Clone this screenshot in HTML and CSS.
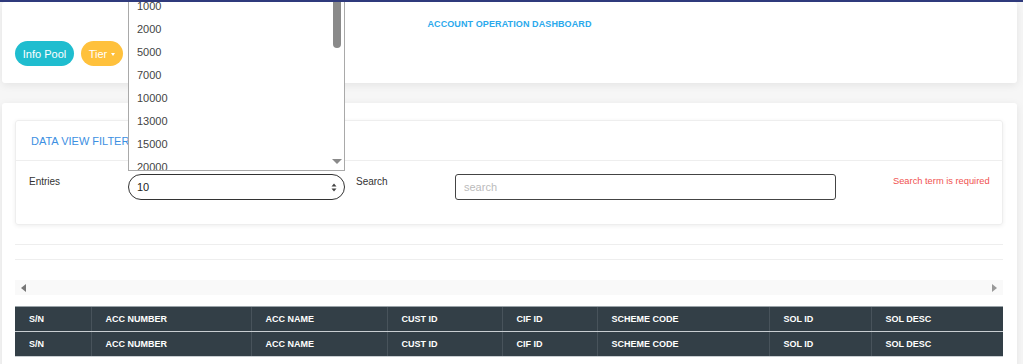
FILE: index.html
```html
<!DOCTYPE html>
<html lang="en">
  <head>
    <meta charset="UTF-8" />
    <meta name="viewport" content="width=device-width, initial-scale=1.0" />
    <title>Account Operation Dashboard</title>
    <link rel="stylesheet" href="styles.css">
  </head>
  <body>
    <div class="page">
      <!-- Header card -->
      <div class="card top-card">
        <h1 class="title">ACCOUNT OPERATION DASHBOARD</h1>
        <div class="actions">
          <button class="pill pill-info">Info Pool</button>
          <button class="pill pill-warn">Tier <span class="caret"></span></button>
        </div>
      </div>

      <!-- Main card -->
      <div class="card main-card">
        <div class="filters">
          <div class="filters-head">DATA VIEW FILTERS</div>
          <div class="filters-body">
            <label class="field-label entries-label">Entries</label>
            <div class="select-wrap">
              <div class="select">
                <span>10</span>
                <svg class="updown" width="6" height="9" viewBox="0 0 6 9">
                  <path d="M3 0.5 L5.5 3.5 H0.5 Z M3 8.5 L5.5 5.5 H0.5 Z" fill="#444" />
                </svg>
              </div>
              <!-- open dropdown -->
              <ul class="options">
                <li>1000</li>
                <li>2000</li>
                <li>5000</li>
                <li>7000</li>
                <li>10000</li>
                <li>13000</li>
                <li>15000</li>
                <li>20000</li>
              </ul>
            </div>
            <label class="field-label search-label">Search</label>
            <input class="search" type="text" placeholder="search" />
            <span class="error">Search term is required</span>
          </div>
        </div>

        <hr class="sep" />
        <hr class="sep" />

        <div class="hscroll">
          <span class="arrow arrow-left"></span>
          <span class="arrow arrow-right"></span>
        </div>

        <table class="grid">
          <colgroup>
            <col style="width: 76px" />
            <col style="width: 160px" />
            <col style="width: 136px" />
            <col style="width: 115px" />
            <col style="width: 95px" />
            <col style="width: 172px" />
            <col style="width: 102px" />
            <col style="width: 132px" />
          </colgroup>
          <thead>
            <tr>
              <th>S/N</th>
              <th>ACC NUMBER</th>
              <th>ACC NAME</th>
              <th>CUST ID</th>
              <th>CIF ID</th>
              <th>SCHEME CODE</th>
              <th>SOL ID</th>
              <th>SOL DESC</th>
            </tr>
            <tr>
              <th>S/N</th>
              <th>ACC NUMBER</th>
              <th>ACC NAME</th>
              <th>CUST ID</th>
              <th>CIF ID</th>
              <th>SCHEME CODE</th>
              <th>SOL ID</th>
              <th>SOL DESC</th>
            </tr>
          </thead>
        </table>
      </div>
    </div>
  </body>
</html>
```

FILE: styles.css
```css
html,
body {
  height: 100%;
}
body {
  font-family: "Liberation Sans", Arial, sans-serif;
  background-color: #f6f6f6;
  margin: 0;
  padding: 0;
  border-top: 2px solid #2f3a7c;
  overflow: hidden;
}
.page {
  width: 1015px;
  padding-left: 2px;
}
.card {
  background-color: #fff;
  border-radius: 3px;
  box-shadow: 0 2px 8px rgba(0, 0, 0, 0.08);
}
.top-card {
  height: 81px;
  padding: 16px 13px 0;
  box-sizing: border-box;
}
.title {
  margin: 0;
  text-align: center;
  font-size: 9px;
  font-weight: bold;
  color: #2aa9ec;
  letter-spacing: 0.1px;
  line-height: 12px;
}
.actions {
  display: flex;
  gap: 7px;
  margin-top: 11px;
}
.pill {
  border: none;
  height: 25px;
  border-radius: 13px;
  color: #fff;
  font-family: inherit;
  font-size: 11px;
  padding: 0;
  white-space: nowrap;
  cursor: pointer;
}
.pill-info {
  background-color: #1fbdcf;
  width: 59px;
}
.pill-warn {
  background-color: #ffc13c;
  width: 42px;
}
.caret {
  display: inline-block;
  border-left: 2.5px solid transparent;
  border-right: 2.5px solid transparent;
  border-top: 3px solid #fff;
  vertical-align: middle;
  margin-left: 1px;
}
.main-card {
  margin-top: 20px;
  height: 280px;
  padding: 17px 14px 0 13px;
  box-sizing: border-box;
}
.filters {
  border: 1px solid #eee;
  border-radius: 3px;
  box-shadow: 0 1px 4px rgba(0, 0, 0, 0.07);
  height: 105px;
  box-sizing: border-box;
}
.filters-head {
  height: 39px;
  border-bottom: 1px solid #eee;
  padding-left: 15px;
  line-height: 40px;
  font-size: 11px;
  color: #3c8fe2;
}
.filters-body {
  display: flex;
  align-items: flex-start;
  padding: 13px 0 0 13px;
}
.field-label {
  font-size: 10px;
  color: #333;
  padding-top: 2px;
}
.entries-label {
  width: 99px;
}
.search-label {
  width: 99px;
  margin-left: 11px;
}
.select-wrap {
  position: relative;
}
.select {
  width: 217px;
  height: 26px;
  border: 1px solid #333;
  border-radius: 13px;
  box-sizing: border-box;
  display: flex;
  align-items: center;
  justify-content: space-between;
  padding: 0 7px 0 8px;
  font-size: 11px;
  color: #222;
}
.options {
  position: absolute;
  left: 0;
  bottom: calc(100% + 3px);
  width: 217px;
  height: 177px;
  margin: 0;
  padding: 0;
  list-style: none;
  background-color: #fff;
  border: 1px solid #a9a9a9;
  box-sizing: border-box;
  overflow: hidden;
  z-index: 5;
}
.options li {
  height: 23px;
  line-height: 23px;
  padding-left: 8px;
  font-size: 11px;
  color: #444;
}
.options::before {
  content: "";
  position: absolute;
  right: 3px;
  top: 0;
  width: 8px;
  height: 53px;
  border-radius: 4px;
  background-color: #8a8a8a;
}
.options::after {
  content: "";
  position: absolute;
  right: 2px;
  bottom: 6px;
  border-left: 5px solid transparent;
  border-right: 5px solid transparent;
  border-top: 5px solid #8a8a8a;
}
.search {
  width: 381px;
  height: 26px;
  border: 1px solid #444;
  border-radius: 3px;
  box-sizing: border-box;
  padding: 0 8px;
  font-family: inherit;
  font-size: 11px;
}
.search::placeholder {
  color: #bbb;
}
.error {
  margin-left: 57px;
  font-size: 9.3px;
  color: #f0524f;
  padding-top: 2px;
}
.sep {
  border: none;
  border-top: 1px solid #eee;
  margin: 19px 0 0;
}
.sep + .sep {
  margin-top: 14px;
}
.hscroll {
  margin-top: 20px;
  height: 15px;
  background-color: #f9f9f9;
  display: flex;
  justify-content: space-between;
  align-items: center;
  padding: 0 6px 0 6px;
}
.arrow {
  width: 0;
  height: 0;
  border-top: 4px solid transparent;
  border-bottom: 4px solid transparent;
}
.arrow-left {
  border-right: 5px solid #777;
}
.arrow-right {
  border-left: 5px solid #999;
}
.grid {
  margin-top: 11px;
  width: 988px;
  border-collapse: collapse;
  table-layout: fixed;
  background-color: #333f47;
}
.grid th {
  height: 24px;
  padding: 0 0 0 14px;
  text-align: left;
  font-size: 9px;
  font-weight: bold;
  color: #fff;
  border-left: 1px solid #48535b;
  border-bottom: 1px solid #c9ced2;
}
.grid th:first-child {
  border-left: none;
}
.grid tr:first-child th {
  border-top: 1px solid #9aa3a8;
}
```
